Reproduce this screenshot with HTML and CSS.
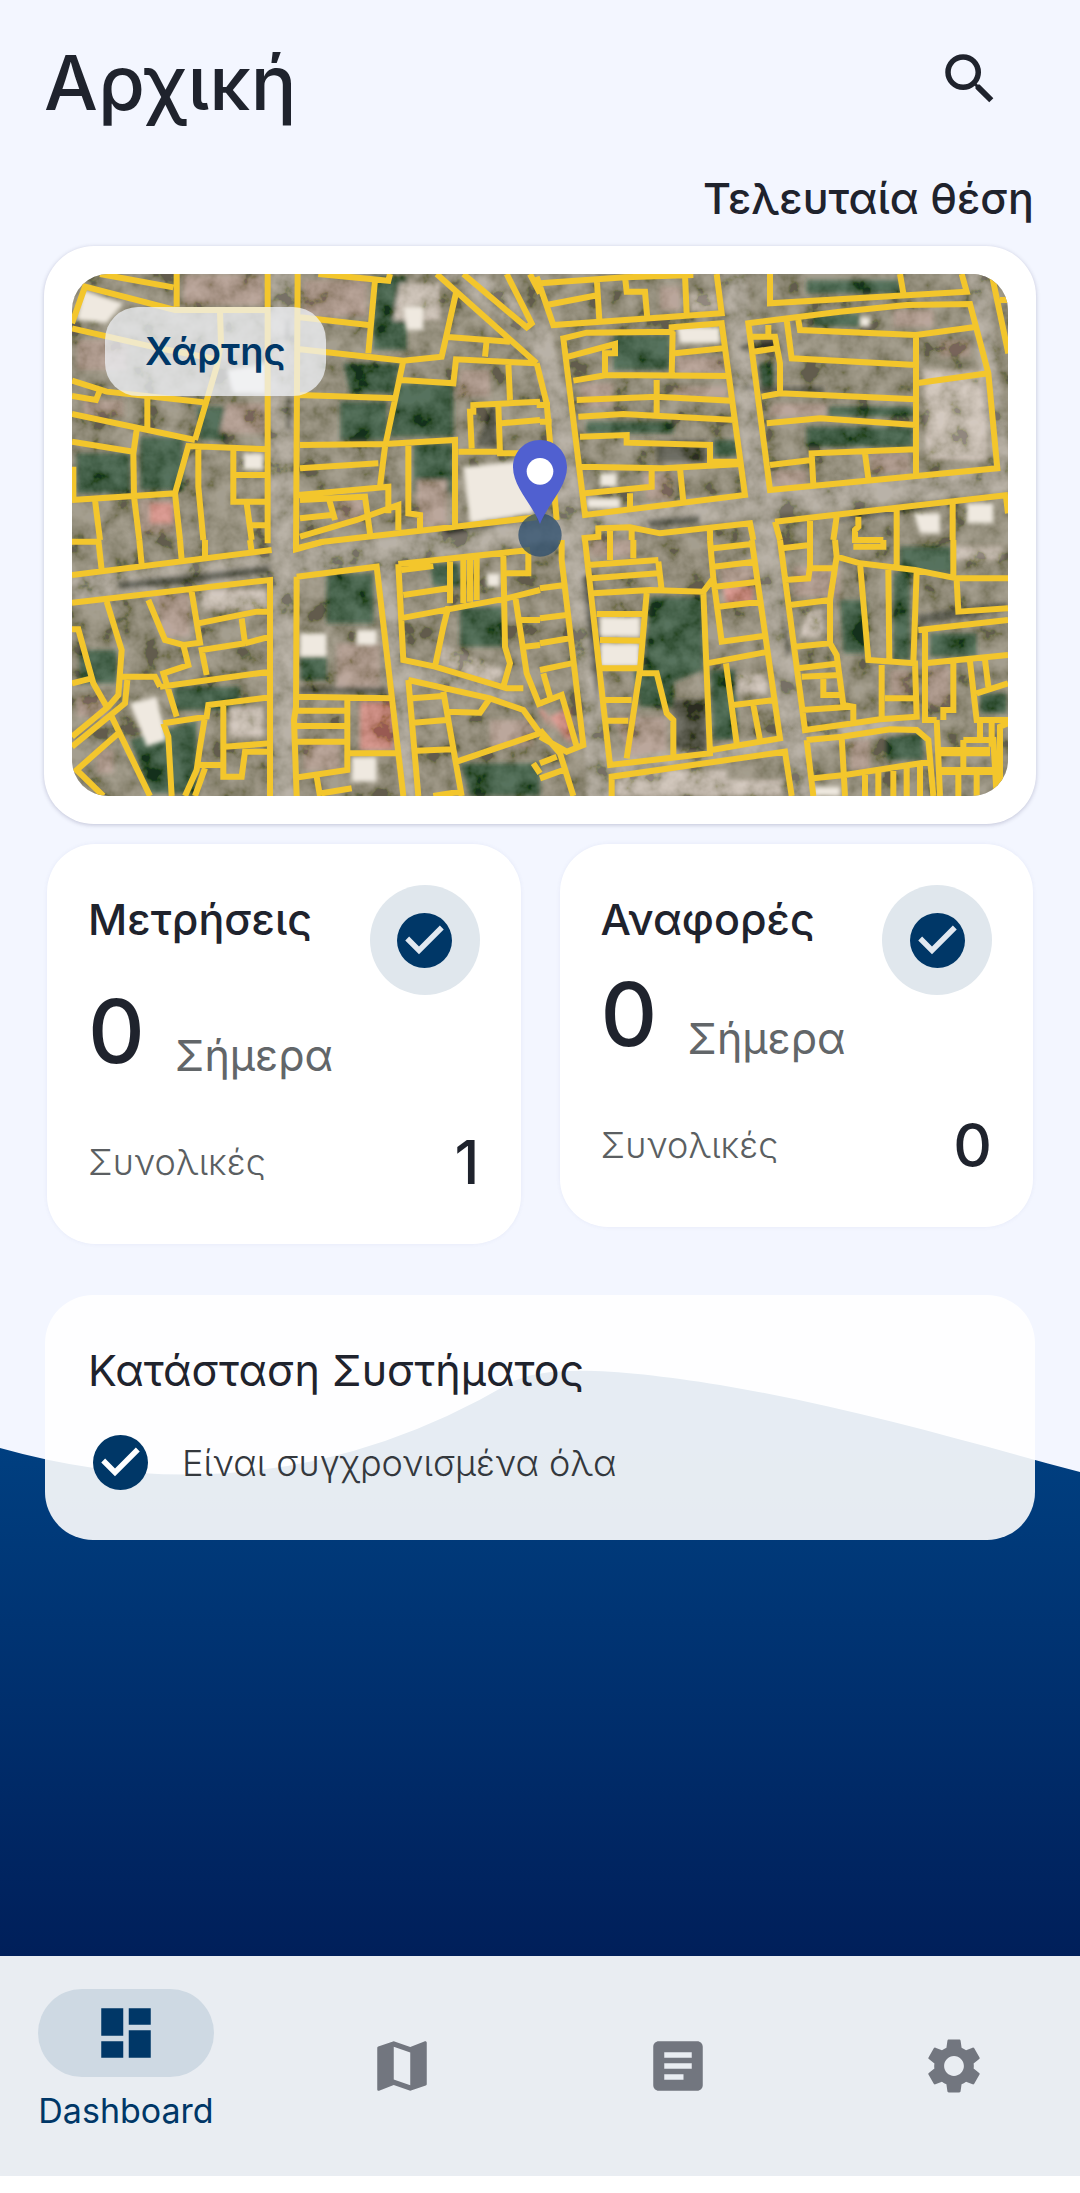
FILE: index.html
```html
<!DOCTYPE html>
<html lang="el">
<head>
<meta charset="utf-8">
<meta name="viewport" content="width=device-width, initial-scale=1">
<title>Αρχική</title>
<link rel="stylesheet" href="styles.css">
</head>
<body>
<main class="screen">
  <svg class="wave" viewBox="0 0 1080 586" preserveAspectRatio="none" aria-hidden="true">
    <defs>
      <linearGradient id="sea" x1="0" y1="0" x2="0" y2="1">
        <stop offset="0" stop-color="#004486"/>
        <stop offset="1" stop-color="#001f5a"/>
      </linearGradient>
    </defs>
    <path fill="url(#sea)" d="M0 78Q270 154 510 13C545 -6 620 -1 720 15C850 37 960 70 1080 102V586H0Z"/>
  </svg>

  <header class="topbar">
    <h1 class="topbar-title">Αρχική</h1>
    <button class="icon-button" type="button" aria-label="Αναζήτηση">
      <svg class="icon" viewBox="0 0 24 24"><path d="M15.5 14h-.79l-.28-.27A6.47 6.47 0 0 0 16 9.500 6.500 6.500 0 1 0 9.500 16c1.610 0 3.090-.59 4.230-1.570l.27.28v.79l5 4.990L20.490 19l-4.990-5zm-6 0C7.010 14 5 11.990 5 9.500S7.010 5 9.500 5 14 7.010 14 9.500 11.990 14 9.500 14z"/></svg>
    </button>
  </header>

  <h2 class="section-title">Τελευταία θέση</h2>

  <section class="map-card">
    <div class="map">
      <svg class="map-view" viewBox="96 102 2808 1566" preserveAspectRatio="xMidYMid slice" aria-hidden="true">
        <defs>
          <filter id="soft" x="-5%" y="-5%" width="110%" height="110%"><feGaussianBlur stdDeviation="7"/></filter>
          <filter id="ground" x="0" y="0" width="100%" height="100%">
            <feTurbulence type="fractalNoise" baseFrequency="0.014" numOctaves="4" seed="8"/>
            <feColorMatrix values="2.200 0 0 0 -0.620  2.100 0 0 0 -0.560  2.200 0 0 0 -0.680  0 0 0 0 1"/>
          </filter>
        </defs>
        <rect x="96" y="102" width="2808" height="1566" fill="#857c68"/>
        <g filter="url(#soft)">
          <g fill="#1f4225">
            <path d="M910 370H1080L1060 460H930ZM1060 430H1240V590H1050ZM1120 610H1240V760H1120ZM1000 110H1100V330H1000ZM300 590H430V750H300ZM470 500H560V600H480ZM110 640H270V760H110ZM900 485H1040V600H900Z"/>
            <path d="M1720 285H1890V390H1720ZM2300 120H2580V160H2300ZM2300 500H2620V530H2300ZM2300 560H2620V620H2300ZM1640 545H1900V580H1640ZM2020 600H2090V650H2020ZM2320 220H2460V260H2320ZM2150 370H2200V460H2160Z"/>
            <path d="M860 1000H1000V1150H860ZM1260 1100H1390V1220H1260ZM120 1230H230V1330H120ZM400 1340H600V1410H400ZM270 1500L470 1440V1660H330ZM1260 1570H1500V1668H1290ZM1170 970H1260V1040H1180ZM780 1250H860V1320H780Z"/>
            <path d="M1830 1070H1990V1290L1890 1330 1810 1290ZM2010 1290H2090V1500H2020ZM2580 920H2740V1000H2580ZM2560 1000H2610V1260H2560ZM2670 1180H2810V1250H2670ZM2540 1480H2650V1560H2540ZM2400 1080H2480V1240H2410ZM2820 1360H2900V1420H2820ZM2050 1020H2040V1060H2120ZM1780 1290H1900V1400H1800Z"/>
          </g>
          <g fill="#a3887a">
            <path d="M430 105H670V195H430ZM790 120H980V230H790ZM110 300H260V390H110ZM130 480H250V530H130ZM560 490H680V580H540ZM300 780H400V880H300ZM1260 390H1350V470H1250ZM890 780H970V850H890ZM1130 720H1220V860H1130Z"/>
            <path d="M1910 350H2050V400H1910ZM1620 430H1720V500H1620ZM1900 440H2060V470H1900ZM2560 210H2680V260H2560ZM2700 300H2790V350H2700ZM2490 640H2610V700H2490ZM2200 490H2360V530H2180ZM1810 700H1900V780H1820ZM2200 690H2300V740H2200ZM1860 140H1920V210H1860Z"/>
            <path d="M340 1060H450V1190H370ZM890 1210H1020V1350H890ZM790 1500H900V1590H790ZM110 1370H200V1430H110ZM170 1530H220V1600H170ZM1720 1430H1880V1550H1770ZM2040 980H2140V1090H2050ZM2660 1280H2730V1400H2660ZM2550 1290H2610V1370H2550ZM2430 1490H2490V1590H2430ZM1350 1440H1480V1520H1350ZM1650 900H1780V950H1650ZM2260 980H2400V1070H2260Z"/>
          </g>
          <g fill="#c4b6aa">
            <path d="M2650 390H2840V660H2660ZM480 1050H680V1110H490ZM1080 130H1200V240H1060ZM1950 160H2030V210H1950ZM570 1400H670V1490H570ZM1730 1620H2230V1668H1730ZM1750 1590H2060V1668H1750ZM2740 920H2890V960H2740ZM1200 1210L1390 1290 1370 1340 1200 1270ZM2300 1110H2350V1190H2280ZM2090 1300H2180V1360H2090Z"/>
          </g>
          <g fill="#cf7a70">
            <path d="M960 1385H1060V1530H960ZM1500 1420L1600 1520 1500 1400ZM2050 1040H2140V1090H2060ZM330 790H400V850H330ZM1590 1400L1600 1510 1510 1440Z"/>
          </g>
          <g class="map-roads">
            <path stroke-width="74" d="M729 90L726 1680"/>
            <path stroke-width="76" d="M96 1049L700 980 1500 870 2160 790 2910 715"/>
            <path stroke-width="74" d="M1230 60L1500 290 1560 540 1590 900 1660 1390 1680 1680"/>
            <path stroke-width="74" d="M2080 90L2130 500 2180 950 2260 1500 2300 1690"/>
            <path stroke-width="42" d="M1035 950L1110 1680"/>
            <path stroke-width="40" d="M1090 1290L1460 1385"/>
            <path stroke-width="50" d="M1670 1590L2240 1510 2620 1450"/>
            <path stroke-width="54" d="M2810 90L2890 700"/>
          </g>
          <g fill="#3a3a2f">
            <path d="M1350 500H1370V620H1310ZM1850 600H2000V665H1850ZM1900 1380H2000V1530H1900ZM230 1025L400 1008 690 975V1000L420 1036 240 1050ZM1820 840L1980 825V850L1830 865ZM2380 840L2480 815 2700 780V800L2400 845ZM780 1340H1040V1360H780ZM2100 440H2350V460H2170ZM2630 1125L2900 1085V1110L2640 1155ZM2100 315L2200 305 2220 325 2100 330ZM1210 865L1420 840V850L1220 885ZM735 240H750V300H735ZM740 470H752V570H740ZM1625 1010L1650 1000 1690 1240 1670 1400ZM2205 940L2225 1130 2255 1230 2240 1250Z"/>
          </g>
        </g>
        <rect x="96" y="102" width="2808" height="1566" filter="url(#ground)" opacity=".26"/>
        <g fill="#efe9e0" filter="url(#soft)">
          <path d="M130 150L250 190 200 250 110 240ZM560 390L680 370V460H580ZM1270 680L1480 660V820L1290 850ZM935 1550H1010V1625H935ZM270 1390L350 1370 380 1500 320 1520ZM780 1180H860V1250H780ZM950 1170H1010V1215H950ZM610 640H670V690H610ZM1680 1130H1800V1190H1680ZM1680 1210H1800V1280H1680ZM1910 260H2040V310H1920ZM1680 700H1730V740H1680ZM1640 775H1740V805H1640ZM2620 820H2700V880H2640ZM2780 790H2860V850H2780ZM1090 200H1150V270H1100ZM2320 1640H2400V1668H2320ZM2460 230H2490V260H2460ZM1340 1000H1380V1040H1340Z"/>
        </g>
        <g class="map-parcels">
          <path d="M180 102L400 142M410 102V200M96 250L135 140 405 210H683M683 102V910M773 102L768 930M96 265L345 322 540 360M540 215L543 310 530 380 465 600M96 422L200 455 490 487M96 468L168 480 180 450M322 470V570M96 522L465 600M96 605L285 636M290 570L280 640 282 770 298 900M96 780L405 760 445 618 683 628M405 760L420 900M475 622V740L490 900M580 630V785H683M585 705H683M620 790L635 900M630 856H683M165 780L180 900M100 680V780M835 102L1045 122 1050 102M1005 120L985 340M780 232L985 255M780 328L1090 362 1205 350 1250 150M1190 102L1490 370M1270 102L1460 262 1475 250 1400 102M1470 102L1500 160M1215 290L1410 305M1340 300L1335 350M1085 420L1240 430 1248 358 1490 370M1405 370L1410 480M1500 485L1300 495V515H1290L1295 625M1375 495L1380 640H1460M1255 635H1380M1385 550L1500 540M1090 362L1035 620 1020 740M775 465L1070 475M780 615L1035 612 1245 600V860M780 685L1015 670M775 765L1045 740V820M865 770L885 840M780 780L975 770 990 880M780 835L875 825M780 890L950 840 1075 795V870M1105 618V820L1140 825V870M768 925L850 905 1245 860 1490 832"/>
          <path transform="translate(1500)" d="M0 130L255 112 460 105M-10 110L40 255 545 220 530 102M20 195L175 165M170 110L178 240M255 110L260 155 315 155 322 235M435 105L440 220M-10 370L20 490 50 840M-10 495H30M0 545H35M70 295L140 278 395 275V262L545 250 615 765 135 825ZM85 350L225 312V340H195V405M398 275L395 405M405 340L550 325M100 422L200 405 570 408M350 420V520M110 480L350 470 575 482M115 530L250 522 585 540M120 590L260 585V608L510 615V665H600M125 680L370 685 605 672M335 690V740L135 760M420 685L430 785M270 760V800M625 250L900 215 1100 195 1290 192 1345 400 1372 685 690 750ZM1128 285V710M740 240L755 355 1128 375M775 240L780 270 1128 285 1300 262M630 290H705L720 370V460M685 255V290M640 335L710 325M1128 430L1345 400M665 470L720 460 1128 478M680 550L840 535 1128 555M690 675L815 660M820 735L815 640 1128 628M975 640L985 715M690 102V190L1280 155 1265 102M1080 102L1090 160M1355 102L1405 340M1380 180H1404M125 895L175 890V865L270 862 360 880 630 850 640 900M210 870V900M275 870V900M510 870V900M705 845L1404 765M705 845L720 900M810 835V900M890 830L880 900M955 830V860L945 870V900H1030M1070 810V900M1238 790V900M1398 770L1404 820"/>
          <path transform="translate(0 900)" d="M96 105L695 30M175 0L185 90M96 5H180M298 0L305 75M420 0L425 60M495 0V50M630 0L635 35M96 188L690 120V768M200 185L245 330 235 465 205 500 96 590M325 180L375 300 430 315 480 308 455 155M475 250L650 215H690M605 235L615 310M430 315L445 375 370 400 410 530M615 310L485 330 500 405M615 310L690 290M360 440L690 395M245 410H345L360 440M262 420L255 490 96 620M96 268H115L160 430 200 500M96 430L155 415M215 530L330 768M235 580L110 690 190 768M370 550L500 530 505 495 690 472M370 550L385 590 395 768M495 530L480 620 470 690 435 768M550 495V710H605L615 635H690M555 620L690 610M475 675H545M495 685L465 768M768 0V28L850 5M770 110L1010 80 1090 768M770 110L768 500 762 540 770 768M770 470L1060 475M768 512H915M770 558H915M770 605H915M922 480V640H1075M922 640V690L775 712M830 710L840 768M845 760L935 745M1075 72L1470 30M1075 72L1090 360 1185 380 1400 445H1450M1085 90L1180 78M1090 165L1225 145M1230 65V190M1270 60V190M1290 55V185M1310 55V180M1080 235L1400 175 1500 150M1225 200L1210 260 1185 380M1390 45L1395 320 1410 370 1390 440M1465 40V100H1400M1425 165L1460 400 1500 500M1440 240H1500M1455 320L1500 315M1105 420L1350 475 1450 510 1500 580 1250 665M1105 420L1135 768M1210 455L1265 768M1115 475L1210 468M1120 548L1220 540M1130 632L1235 628M1220 515L1320 518 1350 475M1180 768L1260 755M1480 670L1500 700"/>
          <path transform="translate(1500 900)" d="M65 0V60L130 615 80 635 0 590M0 145L75 135M0 235L80 225M0 310L90 295M0 390L95 370M10 400L30 470M0 490L65 465 110 620M0 570L60 640 100 768M0 670L50 650M0 715L70 690M135 0L210 675 510 640 490 155M145 75L355 60M155 115L355 100M355 65L365 150M160 160L330 150 490 155 520 115 510 0M210 0V60M280 0V55M320 160L300 390 260 655M170 222H315M180 300L310 302M185 385H300M300 400H350L380 520 400 540V650M195 480H275M200 542H265M635 0L720 595 515 630M520 25L635 12M520 80L645 65M525 140L655 125M520 115L545 305 670 288M535 200L660 185M500 370L685 335M558 370L590 610M580 495L705 480M640 495L660 600M215 768V710L735 635 755 768M720 0L795 570 940 550 1020 538 1130 530 1125 370 985 360 960 70M725 25L810 15M810 0V80L805 115 735 120M815 85H885M885 0L890 50 870 180 750 195M890 50L960 70 1125 90 1250 115H1404M1070 0V75M1030 0V20H940M1240 0V115M870 180V310L890 345 910 495 940 500V550M765 320L870 310M775 385L900 370M785 410L900 405M850 410V465H905M785 510L935 500M1045 90L1048 370M1130 95L1120 370M1250 120L1255 215 1404 205M1135 270L1404 240M1155 275V540H1190M1155 370L1404 345M1240 370V510H1210V540M1290 365L1310 540H1404M1335 360L1345 440M1310 460L1404 430M1025 375V535M1035 475H1130M800 600L905 590 1050 568 1130 570 1165 600 1180 768M800 600L820 768M905 590L915 768M820 715L915 705 1170 665M975 700V768M1015 695V768M1060 685V768M1100 680V768M1140 675V768M1190 540L1200 768M1195 630H1350M1195 640H1350M1200 690H1360M1200 696H1360M1270 600V690M1320 540V600M1270 600H1360L1370 768M1255 700V768M1310 700V768M1355 540V620M1380 730V560L1404 550"/>
        </g>
        <circle cx="1500" cy="885" r="65" fill="#24486b" opacity=".72"/>
        <path fill="#5060d0" fill-rule="evenodd" d="M1500 600C1454 600 1419 636 1419 682C1419 740 1475 790 1500 852C1525 790 1581 740 1581 682C1581 636 1546 600 1500 600Z"/>
        <circle cx="1500" cy="694" r="40" fill="#fff"/>
      </svg>
      <button class="map-chip" type="button">Χάρτης</button>
    </div>
  </section>

  <section class="stats">
    <article class="stat-card">
      <div class="stat-head">
        <div class="stat-main">
          <h3 class="card-title">Μετρήσεις</h3>
          <p class="today today-spaced"><span class="today-value">0</span><span class="today-label">Σήμερα</span></p>
        </div>
        <span class="badge"><svg class="check" viewBox="2 2 20 20"><circle cx="12" cy="12" r="10" fill="#003767"/><path fill="#e1e8f0" d="M10 17l-5-5 1.410-1.410L10 14.170l7.590-7.590L19 8z"/></svg></span>
      </div>
      <p class="total"><span class="total-label">Συνολικές</span><span class="total-value">1</span></p>
    </article>
    <article class="stat-card">
      <div class="stat-head">
        <div class="stat-main">
          <h3 class="card-title">Αναφορές</h3>
          <p class="today"><span class="today-value">0</span><span class="today-label">Σήμερα</span></p>
        </div>
        <span class="badge"><svg class="check" viewBox="2 2 20 20"><circle cx="12" cy="12" r="10" fill="#003767"/><path fill="#e1e8f0" d="M10 17l-5-5 1.410-1.410L10 14.170l7.590-7.590L19 8z"/></svg></span>
      </div>
      <p class="total"><span class="total-label">Συνολικές</span><span class="total-value">0</span></p>
    </article>
  </section>

  <section class="status-card">
    <h3 class="card-title status-title">Κατάσταση Συστήματος</h3>
    <p class="status-row">
      <svg class="check" viewBox="2 2 20 20" aria-hidden="true"><circle cx="12" cy="12" r="10" fill="#003767"/><path fill="#fff" d="M10 17l-5-5 1.410-1.410L10 14.170l7.590-7.590L19 8z"/></svg>
      <span>Είναι συγχρονισμένα όλα</span>
    </p>
  </section>
</main>

<nav class="navbar">
  <a class="nav-item nav-item-active" href="#dashboard" aria-current="page">
    <span class="nav-pill"><svg class="icon" viewBox="0 0 24 24"><path d="M3 13h8V3H3v10zm0 8h8v-6H3v6zm10 0h8V11h-8v10zm0-18v6h8V3h-8z"/></svg></span>
    <span class="nav-label">Dashboard</span>
  </a>
  <a class="nav-item" href="#map" aria-label="Χάρτης">
    <svg class="icon" viewBox="0 0 24 24"><path d="M20.500 3l-.16.03L15 5.100 9 3 3.360 4.900c-.21.07-.36.25-.36.48V20.500c0 .28.22.5.5.5l.16-.03L9 18.900l6 2.100 5.640-1.900c.21-.07.36-.25.36-.48V3.500c0-.28-.22-.5-.5-.5zM15 19l-6-2.110V5l6 2.110V19z"/></svg>
  </a>
  <a class="nav-item" href="#reports" aria-label="Αναφορές">
    <svg class="icon" viewBox="0 0 24 24"><path d="M19 3H5c-1.100 0-2 .9-2 2v14c0 1.100.9 2 2 2h14c1.100 0 2-.9 2-2V5c0-1.100-.9-2-2-2zm-5 14H7v-2h7v2zm3-4H7v-2h10v2zm0-4H7V7h10v2z"/></svg>
  </a>
  <a class="nav-item" href="#settings" aria-label="Ρυθμίσεις">
    <svg class="icon" viewBox="0 0 24 24"><path d="M19.140 12.940c.04-.3.060-.61.060-.94 0-.32-.02-.64-.07-.94l2.030-1.580c.18-.14.23-.41.120-.61l-1.920-3.320c-.12-.22-.37-.29-.59-.22l-2.390.960c-.5-.38-1.030-.7-1.620-.94l-.36-2.540c-.04-.24-.24-.41-.48-.41h-3.840c-.24 0-.43.170-.47.410l-.36 2.540c-.59.240-1.130.570-1.620.940l-2.390-.96c-.22-.08-.47 0-.59.220L2.740 8.870c-.12.210-.08.470.120.610l2.030 1.580c-.05.3-.09.630-.09.940s.02.640.070.940l-2.030 1.580c-.18.140-.23.410-.12.610l1.920 3.320c.12.220.37.290.59.220l2.390-.96c.5.380 1.030.7 1.620.940l.36 2.540c.05.240.24.410.48.410h3.840c.24 0 .44-.17.470-.41l.36-2.540c.59-.24 1.130-.56 1.620-.94l2.390.960c.22.080.47 0 .59-.22l1.920-3.320c.12-.22.070-.47-.12-.61l-2.010-1.580zM12 15.600c-1.980 0-3.600-1.620-3.600-3.600s1.620-3.600 3.600-3.600 3.600 1.620 3.600 3.600-1.620 3.600-3.600 3.600z"/></svg>
  </a>
</nav>
</body>
</html>
```
FILE: styles.css
```css
* {
  box-sizing: border-box;
}

html {
  background: #fff;
}

body {
  margin: 0;
  min-height: 100vh;
  padding-bottom: 17px;
  display: flex;
  flex-direction: column;
  font-family: Inter, "Noto Sans", sans-serif;
  color: #1f232d;
}

h1, h2, h3, p {
  margin: 0;
}

button {
  border: 0;
  font: inherit;
  cursor: pointer;
}

.icon {
  display: block;
  width: 66px;
  height: 66px;
  fill: currentColor;
}

.screen {
  flex: 1;
  position: relative;
  isolation: isolate;
  padding-bottom: 120px;
  background: #f3f6ff;
}

.wave {
  position: absolute;
  z-index: -1;
  left: 0;
  bottom: 0;
  width: 100%;
  height: 586px;
  overflow: visible;
}

.topbar {
  display: flex;
  align-items: flex-start;
  justify-content: space-between;
  padding: 34px 55px 0 44px;
}

.topbar-title {
  font-size: 76px;
  line-height: 96px;
  font-weight: 500;
}

.icon-button {
  padding: 12px 22px 18px;
  background: none;
  color: inherit;
}

.section-title {
  margin: 40px 46px 20px;
  font-size: 43px;
  line-height: 56px;
  font-weight: 500;
  text-align: right;
}

.map-card {
  margin: 0 44px;
  padding: 28px;
  border-radius: 50px;
  background: #fff;
  box-shadow: 0 1px 4px rgba(40, 40, 90, 0.25);
}

.map {
  position: relative;
  border-radius: 36px;
  overflow: hidden;
}

.map-view {
  display: block;
  width: 100%;
  aspect-ratio: 936 / 522;
}

.map-roads {
  fill: none;
  stroke: #a1988a;
}

.map-parcels {
  fill: none;
  stroke: #f3c62c;
  stroke-width: 18;
}

.map-chip {
  position: absolute;
  top: 33px;
  left: 33px;
  padding: 20px 40px 21px;
  border-radius: 33px;
  background: rgba(240, 243, 248, 0.75);
  color: #003767;
  font-size: 38px;
  line-height: 48px;
  font-weight: 600;
}

.stats {
  display: grid;
  grid-template-columns: 1fr 1fr;
  align-items: start;
  gap: 39px;
  margin: 20px 47px 0;
}

.stat-card {
  padding: 41px 41px 46px;
  border-radius: 48px;
  background: #fff;
  box-shadow: 0 0 4px rgba(80, 90, 160, 0.08);
}

.stat-head {
  display: flex;
  align-items: flex-start;
  justify-content: space-between;
}

.stat-main {
  padding-top: 6px;
}

.card-title {
  font-size: 43px;
  line-height: 56px;
  font-weight: 500;
}

.badge {
  display: grid;
  place-items: center;
  width: 110px;
  height: 110px;
  border-radius: 50%;
  background: #e0e7ed;
}

.check {
  display: block;
  width: 55px;
  height: 55px;
}

.today {
  display: flex;
  align-items: flex-end;
  gap: 30px;
  margin-top: 15px;
}

.today-spaced {
  margin-top: 32px;
}

.today-value {
  font-size: 88px;
  line-height: 104px;
  font-weight: 500;
}

.today-label {
  font-size: 43px;
  line-height: 56px;
  color: #626669;
}

.total {
  display: flex;
  align-items: center;
  justify-content: space-between;
  margin-top: 43px;
}

.total-label {
  font-size: 36px;
  line-height: 48px;
  font-weight: 300;
  color: #5b5f62;
}

.total-value {
  font-size: 60px;
  line-height: 72px;
  font-weight: 500;
}

.status-card {
  margin: 51px 45px 0;
  padding: 47px 43px 50px;
  border-radius: 48px;
  background: rgba(255, 255, 255, 0.9);
}

.status-title {
  font-weight: 400;
}

.status-row {
  display: flex;
  align-items: center;
  gap: 34px;
  margin-top: 37px;
  padding-left: 5px;
  font-size: 36px;
  line-height: 48px;
  font-weight: 300;
  color: #34383d;
}

.navbar {
  display: flex;
  align-items: center;
  justify-content: space-between;
  min-height: 220px;
  padding: 0 38px;
  background: #e9edf2;
}

.nav-item {
  display: flex;
  flex-direction: column;
  align-items: center;
  gap: 12px;
  width: 176px;
  color: #72767f;
  text-decoration: none;
}

.nav-item-active {
  padding-bottom: 10px;
  color: #003767;
}

.nav-pill {
  display: grid;
  place-items: center;
  width: 100%;
  height: 88px;
  border-radius: 44px;
  background: #ced9e3;
}

.nav-label {
  font-size: 34px;
  line-height: 44px;
}
```
